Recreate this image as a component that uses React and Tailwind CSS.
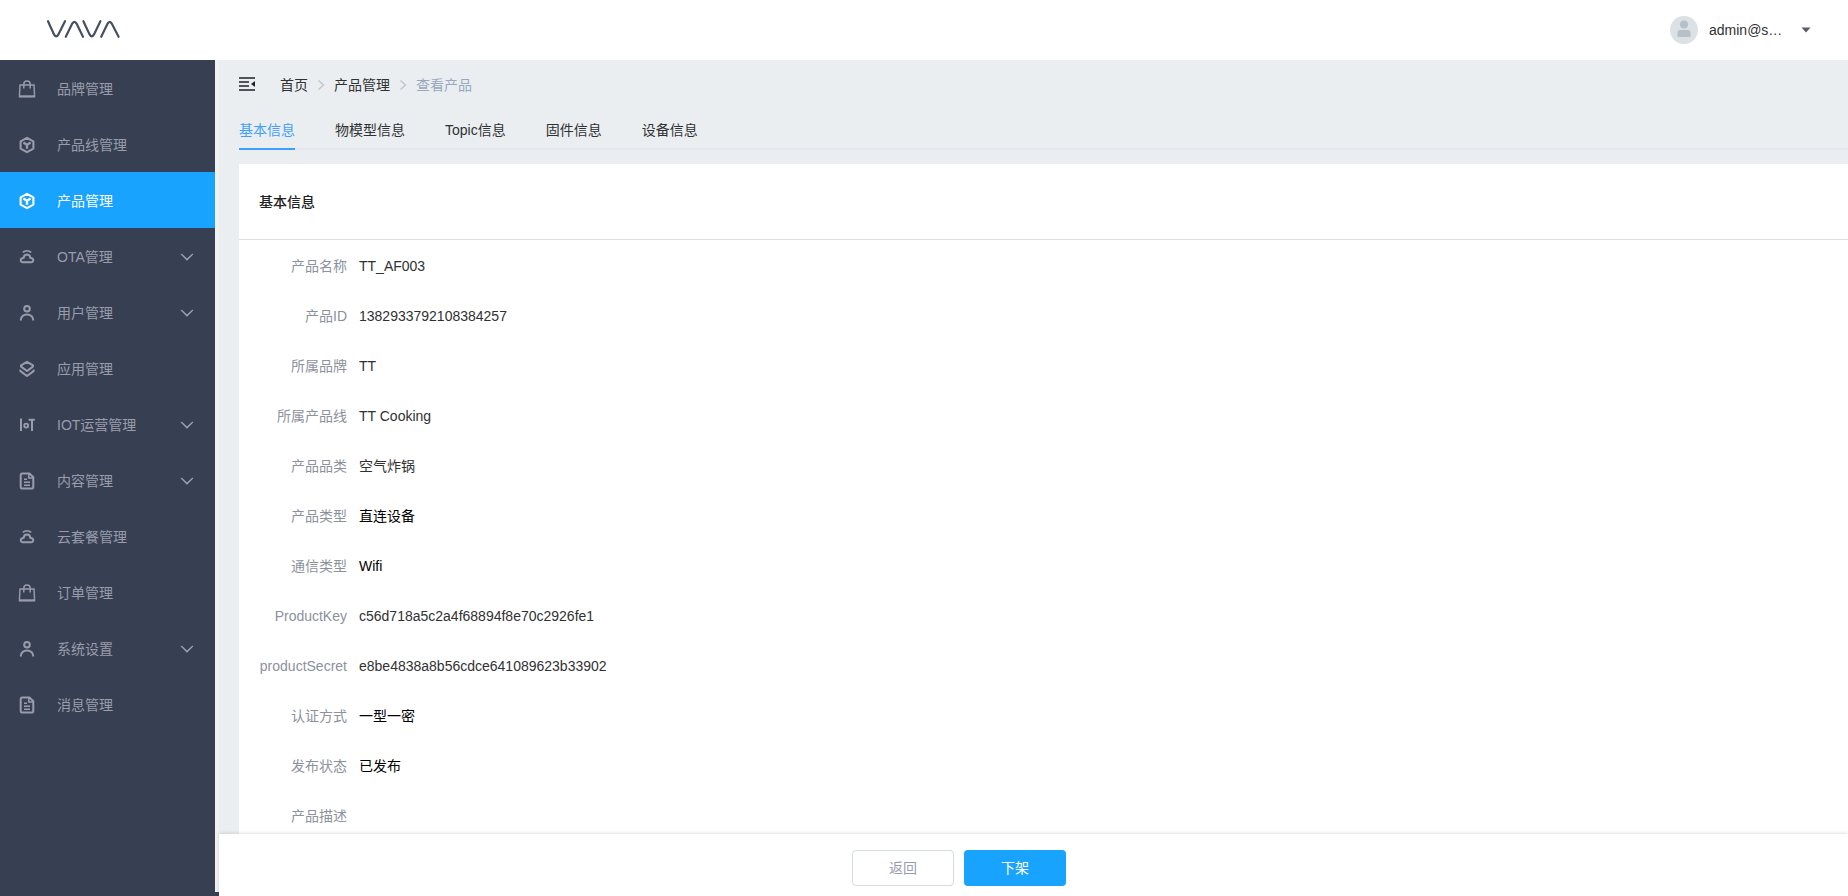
// App.jsx
import React, { useState } from "react";

const BagIcon = () => (
  <svg width="18" height="18" viewBox="0 0 18 18" fill="none" stroke="currentColor">
    <path d="M2 5h14l.6 11.5H1.4z" strokeWidth="1.4" />
    <path d="M1 16.4h16" strokeWidth="2" />
    <path d="M5.8 8.5V4.2a3.2 3.2 0 0 1 6.4 0v4.3" strokeWidth="1.5" />
  </svg>
);

const CubeIcon = () => (
  <svg width="18" height="18" viewBox="0 0 18 18" fill="none" stroke="currentColor">
    <path
      d="M9 1.8l6.4 3.6v7.2L9 16.2l-6.4-3.6V5.4z"
      strokeWidth="2.1"
      strokeLinejoin="round"
    />
    <path d="M5.4 6.6L9 8.8l3.6-2.2M9 8.8v4" strokeWidth="2.3" />
  </svg>
);

const CloudIcon = () => (
  <svg width="18" height="18" viewBox="0 0 18 18" fill="none" stroke="currentColor">
    <path
      d="M4.6 14.2h8.8a2 2 0 0 0 .5-3.9l-1.5-.4c-.2-2.2-1.6-3.5-3.4-3.5s-3.2 1.3-3.4 3.5l-1.5.4a2 2 0 0 0 .5 3.9z"
      strokeWidth="2"
    />
    <path d="M4.8 4.4a6.4 6.4 0 0 1 8.4 0" strokeWidth="1.7" />
  </svg>
);

const UserIcon = () => (
  <svg width="18" height="18" viewBox="0 0 18 18" fill="none" stroke="currentColor">
    <circle cx="9" cy="4.8" r="2.8" strokeWidth="2" />
    <path d="M2.8 16.4v-.6a6.2 5.4 0 0 1 12.4 0v.6" strokeWidth="2" />
  </svg>
);

const LayersIcon = () => (
  <svg
    width="18"
    height="18"
    viewBox="0 0 18 18"
    fill="none"
    stroke="currentColor"
    strokeWidth="2"
    strokeLinejoin="round"
  >
    <path d="M9 1.8l5.6 3.3q1 .9 0 1.8L9 11 3.4 6.9q-1-.9 0-1.8z" />
    <path d="M2.2 9.6q-.2 1.2.9 2L9 16l5.9-4.4q1.1-.8.9-2" />
  </svg>
);

const IotIcon = () => (
  <svg width="18" height="18" viewBox="0 0 18 18" fill="none" stroke="currentColor">
    <path d="M3 2.5v12.5M10.6 3.8h6.2M14 3.8V15" strokeWidth="2" />
    <circle cx="8.2" cy="9.6" r="2" strokeWidth="1.9" />
  </svg>
);

const DocIcon = () => (
  <svg width="18" height="18" viewBox="0 0 18 18" fill="none" stroke="currentColor">
    <path
      d="M4 1.6h7.4l3.9 3.7v9.9a1.3 1.3 0 0 1-1.3 1.3H4a1.3 1.3 0 0 1-1.3-1.3V2.9A1.3 1.3 0 0 1 4 1.6z"
      strokeWidth="2"
    />
    <path d="M10.8 2v4h4.2" strokeWidth="1.5" />
    <path d="M6 7.2h3M6 10.2h6M6 13.2h6" strokeWidth="1.6" />
  </svg>
);

const ChevronDown = () => (
  <svg width="14" height="14" viewBox="0 0 14 14" fill="none" stroke="currentColor">
    <path d="M1.2 4L7 9.6 12.8 4" strokeWidth="1.5" />
  </svg>
);

const ChevronRight = () => (
  <svg
    className="mx-2 text-[#c0c4cc]"
    width="10"
    height="14"
    viewBox="0 0 10 14"
    fill="none"
    stroke="currentColor"
  >
    <path d="M2.5 2.5L7.5 7l-5 4.5" strokeWidth="1.3" />
  </svg>
);

const menus = [
  { name: "品牌管理", Icon: BagIcon },
  { name: "产品线管理", Icon: CubeIcon },
  { name: "产品管理", Icon: CubeIcon },
  { name: "OTA管理", Icon: CloudIcon, children: true },
  { name: "用户管理", Icon: UserIcon, children: true },
  { name: "应用管理", Icon: LayersIcon },
  { name: "IOT运营管理", Icon: IotIcon, children: true },
  { name: "内容管理", Icon: DocIcon, children: true },
  { name: "云套餐管理", Icon: CloudIcon },
  { name: "订单管理", Icon: BagIcon },
  { name: "系统设置", Icon: UserIcon, children: true },
  { name: "消息管理", Icon: DocIcon },
];

const tabs = ["基本信息", "物模型信息", "Topic信息", "固件信息", "设备信息"];

const fields = [
  { label: "产品名称", value: "TT_AF003" },
  { label: "产品ID", value: "1382933792108384257" },
  { label: "所属品牌", value: "TT" },
  { label: "所属产品线", value: "TT Cooking" },
  { label: "产品品类", value: "空气炸锅" },
  { label: "产品类型", value: "直连设备", dark: true },
  { label: "通信类型", value: "Wifi", dark: true },
  { label: "ProductKey", value: "c56d718a5c2a4f68894f8e70c2926fe1" },
  { label: "productSecret", value: "e8be4838a8b56cdce641089623b33902" },
  { label: "认证方式", value: "一型一密", dark: true },
  { label: "发布状态", value: "已发布", dark: true },
  { label: "产品描述", value: "" },
];

const Header = () => (
  <header className="flex h-[60px] shrink-0 items-center justify-between bg-white pl-[46px] pr-[37px]">
    <svg
      width="75"
      height="22"
      viewBox="0 0 75 22"
      fill="none"
      stroke="#475062"
      strokeWidth="2.2"
      strokeLinecap="round"
      role="img"
      aria-label="VAVA"
    >
      <path d="M2 2.2L8 15.4Q10.2 19.4 12.4 15.4L19 2.2" />
      <path d="M19.8 17.8L26 4.9Q28.4 .7 30.8 4.9L37 17.8" />
      <path d="M37.4 2.2L43.6 15.4Q45.8 19.4 48 15.4L54.4 2.2" />
      <path d="M55.2 17.8L61.4 4.9Q63.7 .7 66 4.9L72.6 17.8" />
    </svg>
    <button className="flex items-center text-sm text-[#303133]">
      <svg width="28" height="28" viewBox="0 0 28 28">
        <circle cx="14" cy="14" r="14" fill="#dce1e5" />
        <circle cx="14" cy="8.5" r="4" fill="#b5c0c9" />
        <path d="M7.5 21v-4a3 3 0 0 1 3-3h7a3 3 0 0 1 3 3v4z" fill="#b5c0c9" />
      </svg>
      <span className="ml-[11px] w-[74px] text-left">admin@s…</span>
      <svg className="ml-[18px]" width="10" height="6" viewBox="0 0 10 6">
        <path d="M.5 .5h9L5 5.5z" fill="#5a5e66" />
      </svg>
    </button>
  </header>
);

const Sidebar = () => (
  <aside className="w-[219px] shrink-0 border-b-4 border-[#364052] bg-[#f1f1f1] pr-1">
    <nav className="h-full overflow-hidden bg-[#364052] text-sm text-[#9b9cab]">
      {menus.map(({ name, Icon, children }) => (
        <a
          key={name}
          href="#"
          className={`flex h-14 items-center pl-[18px] pr-[21px] pt-0.5 ${
            name === "产品管理" ? "bg-[#18a3fe] text-white" : ""
          }`}
        >
          <Icon />
          <span className="ml-[21px] flex-1">{name}</span>
          {children && <ChevronDown />}
        </a>
      ))}
    </nav>
  </aside>
);

const Breadcrumb = () => (
  <div className="flex h-[50px] items-center text-sm text-[#303133]">
    <button aria-label="Toggle menu" className="mr-[25px]">
      <svg width="16" height="16" viewBox="0 0 16 16" fill="#1f2226">
        <path d="M0 .2h16v1.6H0zM0 4.2h10v1.6H0zM0 8.2h10v1.6H0zM0 12.2h16v1.6H0zM16 4v6l-4-3z" />
      </svg>
    </button>
    <a href="#">首页</a>
    <ChevronRight />
    <a href="#">产品管理</a>
    <ChevronRight />
    <span className="text-[#97a8be]">查看产品</span>
  </div>
);

const App = () => {
  const [active, setActive] = useState("基本信息");

  return (
    <div className="flex h-screen flex-col overflow-hidden font-['Liberation_Sans','Noto_Sans_CJK_SC',sans-serif]">
      <Header />
      <div className="flex min-h-0 flex-1">
        <Sidebar />
        <div className="flex min-w-0 flex-1 flex-col bg-[#eaeef1]">
          <main className="min-h-0 flex-1 overflow-hidden pl-5">
            <Breadcrumb />
            <div className="flex h-10 gap-10 text-sm shadow-[inset_0_-2px_0_#e4e7ed]">
              {tabs.map((tab) => (
                <button
                  key={tab}
                  onClick={() => setActive(tab)}
                  className={`border-b-2 pt-0.5 ${
                    tab === active
                      ? "border-[#409eff] text-[#409eff]"
                      : "border-transparent text-[#303133]"
                  }`}
                >
                  {tab}
                </button>
              ))}
            </div>

            <section className="mt-3.5 bg-white">
              <h2 className="flex h-[76px] items-center border-b border-[#dcdfe0] px-5 text-sm font-medium text-[#222222]">
                基本信息
              </h2>
              <dl className="text-sm">
                {fields.map(({ label, value, dark }) => (
                  <div key={label} className="flex h-[50px] items-center gap-3 pt-px">
                    <dt className="w-[108px] text-right text-[#8c919d]">{label}</dt>
                    <dd className={dark ? "text-black" : "text-[#303133]"}>{value}</dd>
                  </div>
                ))}
              </dl>
            </section>
          </main>

          <footer className="relative flex h-[62px] shrink-0 items-center justify-center gap-2.5 bg-white pr-[149px] pt-1.5 text-sm shadow-[0_-1px_3px_rgba(0,0,0,0.12)]">
            <button className="h-9 w-[102px] rounded-sm border border-[#d5dce2] text-[#9b9cab]">
              返回
            </button>
            <button className="h-9 w-[102px] rounded-sm bg-[#18a3fe] text-white">
              下架
            </button>
          </footer>
        </div>
      </div>
    </div>
  );
};

export default App;
